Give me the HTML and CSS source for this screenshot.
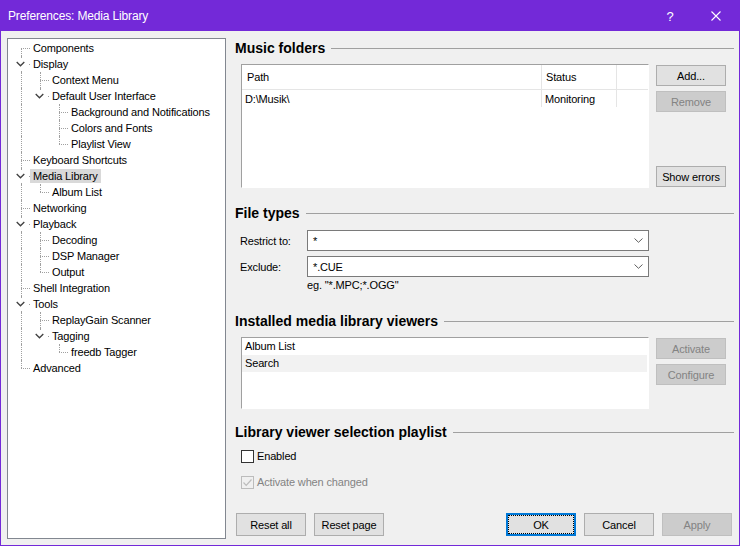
FILE: index.html
```html
<!DOCTYPE html>
<html>
<head>
<meta charset="utf-8">
<title>Preferences: Media Library</title>
<link rel="stylesheet" href="styles.css">
</head>
<body>
<div class="window">
  <div class="titlebar">
    <span class="title">Preferences: Media Library</span>
    <span class="tb-btn help">?</span>
    <span class="tb-btn close"><svg width="10" height="10" viewBox="0 0 10 10"><path d="M0.5 0.5L9.5 9.5M9.5 0.5L0.5 9.5" stroke="#fff" stroke-width="1.1" fill="none"/></svg></span>
  </div>
  <div class="content">
    <div class="tree">
      <div class="row"><span class="c F"></span><span class="lbl">Components</span></div>
      <div class="row"><span class="c T"><svg class="chev" width="9" height="6" viewBox="0 0 9 6"><polyline points="0.7,1 4.5,4.8 8.3,1" fill="none" stroke="#404040" stroke-width="1.3"/></svg></span><span class="lbl">Display</span></div>
      <div class="row"><span class="c I"></span><span class="c T"></span><span class="lbl">Context Menu</span></div>
      <div class="row"><span class="c I"></span><span class="c L"><svg class="chev" width="9" height="6" viewBox="0 0 9 6"><polyline points="0.7,1 4.5,4.8 8.3,1" fill="none" stroke="#404040" stroke-width="1.3"/></svg></span><span class="lbl">Default User Interface</span></div>
      <div class="row"><span class="c I"></span><span class="c"></span><span class="c T"></span><span class="lbl">Background and Notifications</span></div>
      <div class="row"><span class="c I"></span><span class="c"></span><span class="c T"></span><span class="lbl">Colors and Fonts</span></div>
      <div class="row"><span class="c I"></span><span class="c"></span><span class="c L"></span><span class="lbl">Playlist View</span></div>
      <div class="row"><span class="c T"></span><span class="lbl">Keyboard Shortcuts</span></div>
      <div class="row"><span class="c T"><svg class="chev" width="9" height="6" viewBox="0 0 9 6"><polyline points="0.7,1 4.5,4.8 8.3,1" fill="none" stroke="#404040" stroke-width="1.3"/></svg></span><span class="lbl sel">Media Library</span></div>
      <div class="row"><span class="c I"></span><span class="c L"></span><span class="lbl">Album List</span></div>
      <div class="row"><span class="c T"></span><span class="lbl">Networking</span></div>
      <div class="row"><span class="c T"><svg class="chev" width="9" height="6" viewBox="0 0 9 6"><polyline points="0.7,1 4.5,4.8 8.3,1" fill="none" stroke="#404040" stroke-width="1.3"/></svg></span><span class="lbl">Playback</span></div>
      <div class="row"><span class="c I"></span><span class="c T"></span><span class="lbl">Decoding</span></div>
      <div class="row"><span class="c I"></span><span class="c T"></span><span class="lbl">DSP Manager</span></div>
      <div class="row"><span class="c I"></span><span class="c L"></span><span class="lbl">Output</span></div>
      <div class="row"><span class="c T"></span><span class="lbl">Shell Integration</span></div>
      <div class="row"><span class="c T"><svg class="chev" width="9" height="6" viewBox="0 0 9 6"><polyline points="0.7,1 4.5,4.8 8.3,1" fill="none" stroke="#404040" stroke-width="1.3"/></svg></span><span class="lbl">Tools</span></div>
      <div class="row"><span class="c I"></span><span class="c T"></span><span class="lbl">ReplayGain Scanner</span></div>
      <div class="row"><span class="c I"></span><span class="c L"><svg class="chev" width="9" height="6" viewBox="0 0 9 6"><polyline points="0.7,1 4.5,4.8 8.3,1" fill="none" stroke="#404040" stroke-width="1.3"/></svg></span><span class="lbl">Tagging</span></div>
      <div class="row"><span class="c I"></span><span class="c"></span><span class="c L"></span><span class="lbl">freedb Tagger</span></div>
      <div class="row"><span class="c L"></span><span class="lbl">Advanced</span></div>
    </div>

    <div class="page">
      <div class="sec-head">Music folders</div>
      <div class="group mf">
        <div class="lv">
          <div class="lv-head">
            <div class="col c1">Path</div>
            <div class="col c2">Status</div>
            <div class="col c3"></div>
          </div>
          <div class="lv-row">
            <div class="col c1">D:\Musik\</div>
            <div class="col c2">Monitoring</div>
            <div class="col c3"></div>
          </div>
        </div>
        <div class="btncol">
          <div class="btn first">Add...</div>
          <div class="btn next disabled">Remove</div>
          <div class="btn last">Show errors</div>
        </div>
      </div>

      <div class="sec-head ft-head">File types</div>
      <div class="ft">
        <div class="ft-row">
          <span class="ft-label">Restrict to:</span>
          <div class="combo"><span>*</span><svg width="9" height="5" viewBox="0 0 9 5"><polyline points="0.5,0.5 4.5,4.3 8.5,0.5" fill="none" stroke="#606060" stroke-width="1"/></svg></div>
        </div>
        <div class="ft-row">
          <span class="ft-label">Exclude:</span>
          <div class="combo"><span>*.CUE</span><svg width="9" height="5" viewBox="0 0 9 5"><polyline points="0.5,0.5 4.5,4.3 8.5,0.5" fill="none" stroke="#606060" stroke-width="1"/></svg></div>
        </div>
        <div class="hint">eg. "*.MPC;*.OGG"</div>
      </div>

      <div class="sec-head iv-head">Installed media library viewers</div>
      <div class="group iv">
        <div class="lb">
          <div class="lb-row">Album List</div>
          <div class="lb-row alt">Search</div>
        </div>
        <div class="btncol">
          <div class="btn first disabled">Activate</div>
          <div class="btn next disabled">Configure</div>
        </div>
      </div>

      <div class="sec-head lv-sel-head">Library viewer selection playlist</div>
      <div class="cbrow first-cb">
        <span class="cb"></span><span>Enabled</span>
      </div>
      <div class="cbrow second-cb disabled">
        <span class="cb dis"><svg width="11" height="11" viewBox="0 0 11 11"><polyline points="1.5,5.5 4.2,8.3 9.5,2.5" fill="none" stroke="#bcbcbc" stroke-width="1.2"/></svg></span><span>Activate when changed</span>
      </div>

      <div class="footer">
        <div class="fbtn">Reset all</div>
        <div class="fbtn">Reset page</div>
        <div class="fbtn ok">OK</div>
        <div class="fbtn">Cancel</div>
        <div class="fbtn disabled">Apply</div>
      </div>
    </div>
  </div>
</div>
</body>
</html>
```

FILE: styles.css
```css
html, body {
  margin: 0;
  padding: 0;
  background: #ffffff;
}
body {
  font-family: "Liberation Sans", Arial, sans-serif;
  font-size: 11px;
  letter-spacing: -0.15px;
  color: #000;
}
.window {
  width: 740px;
  height: 546px;
  box-sizing: border-box;
  border: 1px solid #7329d8;
  border-top: 0;
  background: #f0f0f0;
  display: flex;
  flex-direction: column;
  overflow: hidden;
}
.titlebar {
  height: 31px;
  flex: none;
  background: #7329d8;
  color: #fff;
  display: flex;
  align-items: center;
  font-size: 12px;
}
.title {
  padding-left: 7px;
  flex: 1;
  padding-top: 1px;
}
.tb-btn {
  width: 46px;
  height: 31px;
  display: flex;
  align-items: center;
  justify-content: center;
}
.help {
  font-size: 13px;
  padding-top: 1px;
}
.close svg {
  display: block;
  margin-top: 1px;
}

.content {
  flex: 1;
  display: flex;
  min-height: 0;
}

/* tree */
.tree {
  margin: 7px 0 0 6px;
  width: 219px;
  height: 501px;
  flex: none;
  box-sizing: border-box;
  border: 1px solid #828790;
  background: #fff;
  padding: 1px 0 0 3px;
}
.row {
  display: flex;
  height: 16px;
  align-items: center;
}
.c {
  width: 19px;
  height: 16px;
  flex: none;
  position: relative;
  display: flex;
  align-items: flex-start;
}
.c.I::before,
.c.T::before,
.c.L::before,
.c.F::before {
  content: "";
  position: absolute;
  left: 10px;
  border-left: 1px dotted #a0a0a0;
}
.c.I::before, .c.T::before { top: 0; height: 16px; }
.c.L::before { top: 0; height: 8px; }
.c.F::before { top: 8px; height: 8px; }
.c.T::after,
.c.L::after,
.c.F::after {
  content: "";
  position: absolute;
  left: 10px;
  top: 8px;
  width: 9px;
  border-top: 1px dotted #a0a0a0;
}
.chev {
  position: relative;
  z-index: 1;
  display: block;
  margin: 5px 0 0 5px;
  padding: 0 3px 0 0;
  background: #fff;
  box-shadow: 0 -3px 0 #fff, 0 3px 0 #fff;
}
.lbl {
  height: 14px;
  line-height: 14px;
  padding: 0 3px;
  white-space: nowrap;
}
.lbl.sel {
  background: #d9d9d9;
}

/* page */
.page {
  flex: 1;
  min-width: 0;
  display: flex;
  flex-direction: column;
  padding: 9px 5px 9px 9px;
}
.sec-head {
  display: flex;
  align-items: center;
  height: 16px;
  font-size: 14px;
  font-weight: bold;
  letter-spacing: 0;
  gap: 6px;
  white-space: nowrap;
}
.sec-head::after {
  content: "";
  flex: 1;
  border-top: 1px solid #a0a0a0;
  margin-top: 1px;
}
.group {
  display: flex;
  gap: 7px;
  padding-left: 6px;
}
.mf { margin-top: 8px; }
.lv {
  width: 408px;
  height: 124px;
  box-sizing: border-box;
  border: 1px solid;
  border-color: #a0a0a0 #ffffff #ffffff #a0a0a0;
  background: #fff;
}
.lv-head {
  display: flex;
  height: 25px;
  box-sizing: border-box;
  border-bottom: 1px solid #e5e5e5;
}
.lv-row {
  display: flex;
  height: 17px;
}
.col {
  box-sizing: border-box;
  display: flex;
  align-items: center;
  white-space: nowrap;
}
.col.c1 { width: 300px; border-right: 1px solid #e5e5e5; }
.col.c2 { width: 75px; border-right: 1px solid #e5e5e5; }
.col.c3 { flex: 1; }
.lv-head .col { padding-left: 5px; }
.lv-head .col.c2 { padding-left: 4px; }
.lv-row .col { padding-left: 3px; }

.btncol {
  display: flex;
  flex-direction: column;
  width: 70px;
}
.btn {
  height: 21px;
  box-sizing: border-box;
  border: 1px solid #adadad;
  background: #e1e1e1;
  display: flex;
  align-items: center;
  justify-content: center;
  white-space: nowrap;
}
.btn.first { margin-top: 1px; }
.btn.next { margin-top: 5px; }
.btn.last { margin-top: auto; margin-bottom: 1px; }
.btn.disabled,
.fbtn.disabled {
  background: #cccccc;
  border-color: #bfbfbf;
  color: #838383;
}

/* file types */
.ft-head { margin-top: 17px; }
.ft {
  margin-top: 9px;
  padding-left: 5px;
}
.ft-row {
  display: flex;
  align-items: center;
  height: 21px;
}
.ft-row + .ft-row { margin-top: 5px; }
.ft-label { width: 67px; flex: none; }
.combo {
  width: 342px;
  height: 21px;
  box-sizing: border-box;
  border: 1px solid #7a7a7a;
  background: #fff;
  display: flex;
  align-items: center;
  justify-content: space-between;
  padding: 0 5px 0 5px;
}
.combo svg { display: block; }
.hint {
  margin-top: 2px;
  padding-left: 67px;
  line-height: 13px;
  height: 13px;
}

/* viewers */
.iv-head { margin-top: 21px; }
.iv { margin-top: 8px; }
.lb {
  width: 408px;
  height: 72px;
  box-sizing: border-box;
  border: 1px solid;
  border-color: #a0a0a0 #ffffff #ffffff #a0a0a0;
  background: #fff;
}
.lb-row {
  height: 17px;
  line-height: 17px;
  padding-left: 3px;
  margin-right: 1px;
}
.lb-row.alt { background: #f2f2f2; }

/* checkboxes */
.lv-sel-head { margin-top: 15px; }
.cbrow {
  display: flex;
  align-items: center;
  height: 16px;
  padding-left: 6px;
  gap: 3px;
}
.first-cb { margin-top: 8px; }
.second-cb { margin-top: 10px; }
.cb {
  width: 13px;
  height: 13px;
  box-sizing: border-box;
  border: 1px solid #333333;
  background: #fff;
  flex: none;
}
.cb.dis {
  border-color: #bcbcbc;
  background: transparent;
}
.cb svg { display: block; }
.cbrow.disabled { color: #838383; }

/* footer */
.footer {
  margin-top: auto;
  display: flex;
  gap: 8px;
  padding: 0 2px 0 1px;
}
.fbtn {
  width: 70px;
  height: 23px;
  box-sizing: border-box;
  border: 1px solid #adadad;
  background: #e1e1e1;
  display: flex;
  align-items: center;
  justify-content: center;
  white-space: nowrap;
}
.fbtn.ok {
  margin-left: auto;
  border: 1px solid #0078d7;
  box-shadow: inset 0 0 0 1px #0078d7;
  outline: 1px dotted #000;
  outline-offset: -3px;
}
```
